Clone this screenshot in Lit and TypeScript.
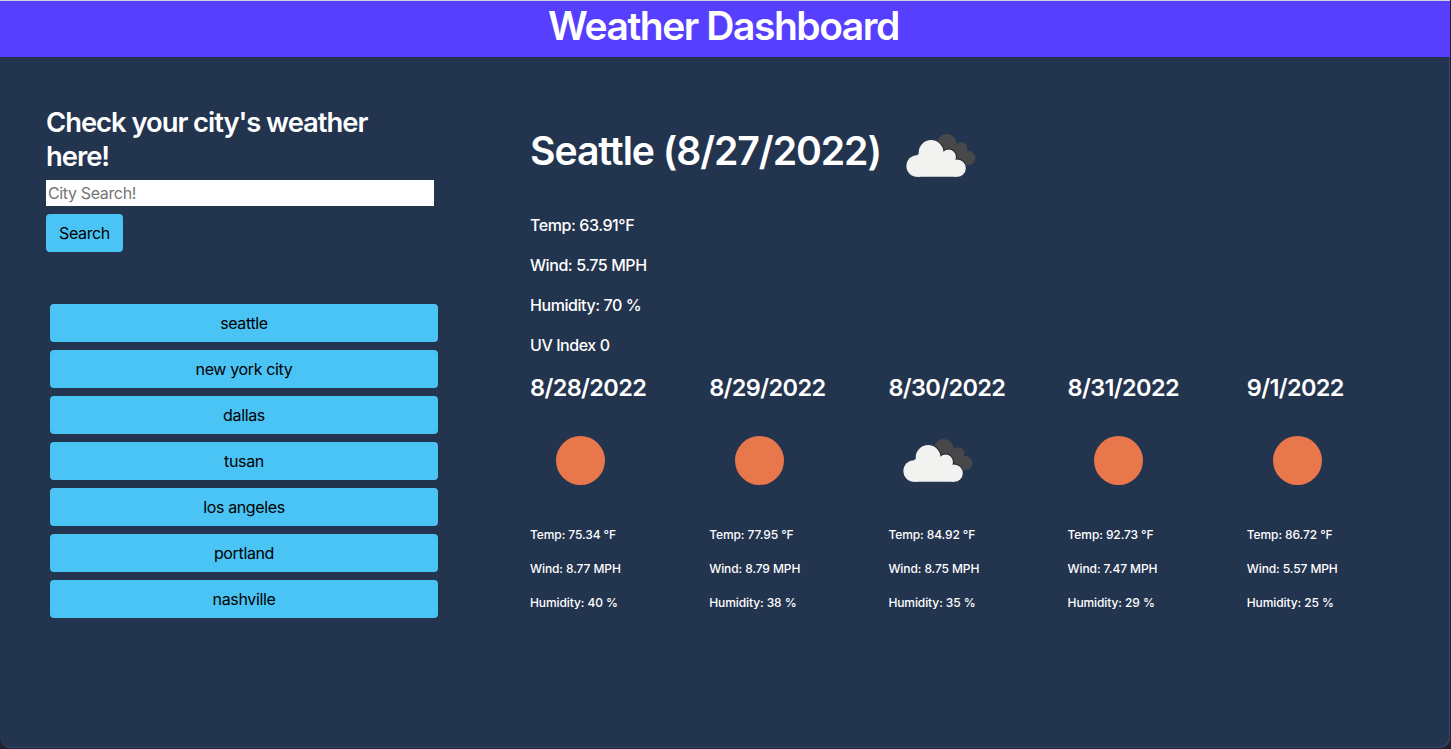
import { LitElement, html, css, svg } from "lit";
import { customElement, property } from "lit/decorators.js";

interface Day {
  date: string;
  icon: "sun" | "clouds";
  temp: string;
  wind: string;
  humidity: string;
}

const CITIES = ["seattle", "new york city", "dallas", "tusan", "los angeles", "portland", "nashville"];

const DAYS: Day[] = [
  { date: "8/28/2022", icon: "sun", temp: "75.34", wind: "8.77", humidity: "40" },
  { date: "8/29/2022", icon: "sun", temp: "77.95", wind: "8.79", humidity: "38" },
  { date: "8/30/2022", icon: "clouds", temp: "84.92", wind: "8.75", humidity: "35" },
  { date: "8/31/2022", icon: "sun", temp: "92.73", wind: "7.47", humidity: "29" },
  { date: "9/1/2022", icon: "sun", temp: "86.72", wind: "5.57", humidity: "25" },
];

@customElement("weather-icon")
export class WeatherIcon extends LitElement {
  @property() kind: "sun" | "clouds" = "sun";

  static styles = css`
    :host { display: block; width: 100px; height: 100px; flex: none; }
    svg { display: block; }
  `;

  render() {
    const front = svg`
      <circle cx="26.2" cy="61" r="10.8"/>
      <circle cx="40.1" cy="47.5" r="12.4"/>
      <circle cx="57.6" cy="52" r="7.4"/>
      <circle cx="66.2" cy="63.2" r="8.6"/>
      <path d="M26 50 L40 42 L57 50 L66 56 V71.8 H26 Z"/>`;
    return html`<svg width="100" height="100" viewBox="0 0 100 100">
      ${this.kind === "sun"
        ? svg`<circle cx="50.5" cy="50.5" r="24.5" fill="#e8774b"/>`
        : svg`
          <g fill="#48484a">
            <circle cx="55.7" cy="39" r="10"/>
            <circle cx="70.3" cy="43.4" r="6.2"/>
            <circle cx="77.2" cy="53.2" r="7.1"/>
            <path d="M55 38 L70 40 L78 50 L74 60 L60 55 Z"/>
          </g>
          <clipPath id="back">
            <circle cx="55.7" cy="39" r="10"/>
            <circle cx="70.3" cy="43.4" r="6.2"/>
            <circle cx="77.2" cy="53.2" r="7.1"/>
            <path d="M55 38 L70 40 L78 50 L74 60 L60 55 Z"/>
          </clipPath>
          <g clip-path="url(#back)"><g fill="#242426" stroke="#242426" stroke-width="2">${front}</g></g>
          <g fill="#f2f2f0">${front}</g>`}
    </svg>`;
  }
}

@customElement("app-root")
export class AppRoot extends LitElement {
  static styles = css`
    :host {
      display: block;
      width: 1451px;
      height: 749px;
      box-sizing: border-box;
      padding: 0 1px 1px 0;
      overflow: hidden;
      background: #211f2b;
      color: #fff;
      font: 400 16px/24px Inter, "Liberation Sans", sans-serif;
    }
    *, *::before, *::after { box-sizing: border-box; }
    h1, h2, h3, p { margin: 0; font-weight: 600; white-space: nowrap; }
    p { font-weight: 450; }
    .window {
      height: 748px;
      border-radius: 0 0 10px 10px;
      background: #23344f;
      overflow: hidden;
      box-shadow: inset -1px -1px 0 #34486a;
    }
    .header {
      height: 57px;
      border-top: 1px solid #d5d5dd;
      background: #563fff;
      text-align: center;
    }
    .title { font-size: 39px; line-height: 49px; letter-spacing: -1.45px; padding-right: 3px; }
    .body { display: grid; grid-template-columns: 484px 1fr; padding-left: 46px; }
    .side { width: 392px; padding-top: 48px; }
    .prompt { font-size: 27.4px; line-height: 34px; letter-spacing: -1.03px; }
    .field {
      display: block;
      width: 388px;
      height: 26px;
      margin-top: 7px;
      padding: 1px 2px;
      border: 0;
      border-radius: 0;
      background: #fff;
      font: inherit;
      letter-spacing: -0.36px;
    }
    .field::placeholder { color: #757575; opacity: 1; }
    .btn {
      display: block;
      height: 38px;
      padding: 0;
      border: 0;
      border-radius: 4px;
      background: #4ac3f5;
      color: #000;
      font: inherit;
      letter-spacing: -0.36px;
    }
    .search { width: 77px; margin-top: 8px; }
    .history { display: grid; gap: 8px; padding: 52px 0 0 4px; }
    .main { padding-top: 48px; }
    .current { display: flex; height: 100px; align-items: flex-start; }
    .place { width: 360.5px; padding-top: 22px; font-size: 39.2px; line-height: 48px; letter-spacing: -1.08px; }
    .stats { display: grid; gap: 16px; padding-top: 8px; letter-spacing: -0.43px; }
    .forecast { display: grid; grid-template-columns: repeat(5, 179.2px); padding-top: 16px; }
    .date { font-size: 23.5px; line-height: 29px; letter-spacing: -0.64px; }
    .day-icon { margin-top: 8px; }
    .details { display: grid; gap: 16px; padding-top: 16px; font-size: 12px; line-height: 18px; letter-spacing: -0.09px; }
  `;

  render() {
    return html`
      <div class="window">
        <header class="header"><h1 class="title">Weather Dashboard</h1></header>
        <div class="body">
          <aside class="side">
            <h3 class="prompt">Check your city's weather<br>here!</h3>
            <input class="field" type="text" placeholder="City Search!">
            <button class="btn search">Search</button>
            <div class="history">
              ${CITIES.map((city) => html`<button class="btn">${city}</button>`)}
            </div>
          </aside>
          <main class="main">
            <div class="current">
              <h1 class="place">Seattle (8/27/2022)</h1>
              <weather-icon kind="clouds"></weather-icon>
            </div>
            <div class="stats">
              <p>Temp: 63.91°F</p>
              <p>Wind: 5.75 MPH</p>
              <p>Humidity: 70 %</p>
              <p>UV Index 0</p>
            </div>
            <div class="forecast">
              ${DAYS.map((d) => html`
                <section>
                  <h2 class="date">${d.date}</h2>
                  <weather-icon class="day-icon" kind=${d.icon}></weather-icon>
                  <div class="details">
                    <p>Temp: ${d.temp} °F</p>
                    <p>Wind: ${d.wind} MPH</p>
                    <p>Humidity: ${d.humidity} %</p>
                  </div>
                </section>`)}
            </div>
          </main>
        </div>
      </div>
    `;
  }
}
